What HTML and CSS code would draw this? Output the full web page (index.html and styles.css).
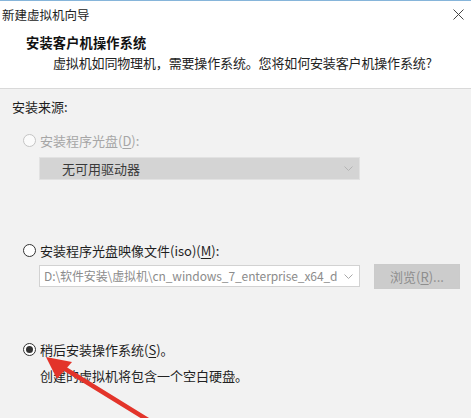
FILE: index.html
```html
<!DOCTYPE html>
<html lang="zh-CN">
<head>
<meta charset="utf-8">
<title>新建虚拟机向导</title>
<link rel="stylesheet" href="styles.css">
</head>
<body>
<div class="window">
  <div class="top">
    <div class="titlebar">
      <span class="title">新建虚拟机向导</span>
      <svg class="close" width="11" height="11" viewBox="0 0 11 11"><path d="M0.5 0.5 L10.5 10.5 M10.5 0.5 L0.5 10.5" stroke="#444" stroke-width="1" fill="none"/></svg>
    </div>
    <div class="header">
      <div class="h-title">安装客户机操作系统</div>
      <div class="h-sub">虚拟机如同物理机，需要操作系统。您将如何安装客户机操作系统?</div>
    </div>
  </div>
  <div class="body">
    <div class="group-label">安装来源:</div>

    <div class="option option-disabled">
      <span class="radio"></span>
      <span class="label">安装程序光盘(<u>D</u>):</span>
    </div>
    <div class="combo combo-disabled">
      <span class="combo-text">无可用驱动器</span>
      <svg class="chev" width="9" height="5" viewBox="0 0 9 5"><path d="M0.5 0.5 L4.5 4.5 L8.5 0.5" stroke="#b4b4b4" stroke-width="1" fill="none"/></svg>
    </div>

    <div class="option option-iso">
      <span class="radio"></span>
      <span class="label">安装程序光盘映像文件(iso)(<u>M</u>):</span>
    </div>
    <div class="iso-row">
      <div class="combo combo-iso">
        <span class="combo-text">D:\软件安装\虚拟机\cn_windows_7_enterprise_x64_d</span>
        <svg class="chev" width="9" height="5" viewBox="0 0 9 5"><path d="M0.5 0.5 L4.5 4.5 L8.5 0.5" stroke="#a8a8a8" stroke-width="1" fill="none"/></svg>
      </div>
      <div class="btn">浏览(<u>R</u>)...</div>
    </div>

    <div class="option option-later">
      <span class="radio radio-checked"></span>
      <span class="label">稍后安装操作系统(<u>S</u>)。</span>
    </div>
    <div class="desc">创建的虚拟机将包含一个空白硬盘。<span class="speck"></span></div>
  </div>

  <svg class="arrow" width="471" height="418" viewBox="0 0 471 418">
    <line x1="62" y1="367" x2="148" y2="420" stroke="#e3342a" stroke-width="4.5" stroke-linecap="round"/>
    <polygon points="46,357 72,362 57,379" fill="#e3342a"/>
  </svg>
</div>
</body>
</html>
```

FILE: styles.css
```css
* {
  box-sizing: border-box;
}

html, body {
  margin: 0;
  padding: 0;
}

body {
  width: 471px;
  height: 418px;
  overflow: hidden;
  background: #f2f2f2;
  font-family: "Noto Sans CJK SC", "Microsoft YaHei", "Noto Sans", sans-serif;
  font-size: 13px;
  color: #1e1e1e;
}

.window {
  position: relative;
  width: 471px;
  height: 418px;
}

.top {
  background: #ffffff;
  border-bottom: 1px solid #d9d9d9;
}

.titlebar {
  height: 30px;
  border-top: 1px solid #86b5da;
  display: flex;
  align-items: center;
  justify-content: space-between;
  padding: 0 7px 1px 2px;
}

.title {
  font-size: 12.5px;
  line-height: 20px;
  color: #222;
}

.close {
  display: block;
  margin-top: -2px;
}

.header {
  padding: 3px 0 15px 0;
}

.h-title {
  padding-left: 26px;
  font-weight: bold;
  font-size: 13.2px;
  letter-spacing: 0.2px;
  line-height: 20px;
  color: #111;
}

.h-sub {
  padding-left: 53px;
  line-height: 20px;
  letter-spacing: -0.15px;
  color: #222;
}

.body {
  padding-top: 8px;
}

.group-label {
  padding-left: 12px;
  line-height: 20px;
}

.option {
  display: flex;
  align-items: center;
  height: 20px;
  padding-left: 23px;
}

.option-disabled {
  margin-top: 13px;
  color: #a6a6a6;
}

.option-iso {
  margin-top: 60px;
}

.option-later {
  margin-top: 50px;
}

.radio {
  width: 13px;
  height: 13px;
  border-radius: 50%;
  border: 1px solid #333;
  background: #fff;
  margin-right: 4px;
  flex: none;
  position: relative;
}

.option-disabled .radio {
  border-color: #c4c4c4;
  background: #fbfbfb;
}

.radio-checked::after {
  content: "";
  position: absolute;
  left: 2px;
  top: 2px;
  width: 7px;
  height: 7px;
  border-radius: 50%;
  background: #333;
}

.label u {
  text-decoration: underline;
  text-underline-offset: 2px;
}

.combo {
  display: flex;
  align-items: center;
  justify-content: space-between;
  margin-left: 39px;
  width: 321px;
  padding: 0 6px 0 5px;
}

.combo-disabled {
  margin-top: 7px;
  height: 23px;
  background: #d4d4d4;
  border: 1px solid #e2e2e2;
  color: #3a3a3a;
}

.combo-disabled .combo-text {
  padding-left: 17px;
}

.combo-iso {
  margin-top: 1px;
  height: 22px;
  background: #ffffff;
  border: 1px solid #d2d2d2;
  color: #8c8c8c;
  margin-left: 0;
  padding-left: 4px;
}

.combo-text {
  white-space: nowrap;
  overflow: hidden;
  line-height: 20px;
  flex: 1;
}

.combo-iso .combo-text {
  font-size: 12px;
  letter-spacing: -0.1px;
  padding-right: 4px;
}

.chev {
  display: block;
  flex: none;
}

.iso-row {
  display: flex;
  align-items: flex-start;
  gap: 14px;
  margin-top: 4px;
  padding-left: 39px;
}

.btn {
  width: 86px;
  height: 25px;
  background: #cccccc;
  border: 1px solid #cbcbcb;
  color: #8e8e8e;
  display: flex;
  align-items: center;
  justify-content: center;
  line-height: 20px;
}

.btn u {
  text-underline-offset: 2px;
}

.desc {
  margin-top: 7px;
  padding-left: 40px;
  line-height: 20px;
  color: #222;
  position: relative;
}

.speck {
  position: absolute;
  left: 231px;
  top: 9px;
  width: 4px;
  height: 4px;
  border-radius: 50%;
  border: 1px solid #888;
}

.arrow {
  position: absolute;
  left: 0;
  top: 0;
  pointer-events: none;
}
```
